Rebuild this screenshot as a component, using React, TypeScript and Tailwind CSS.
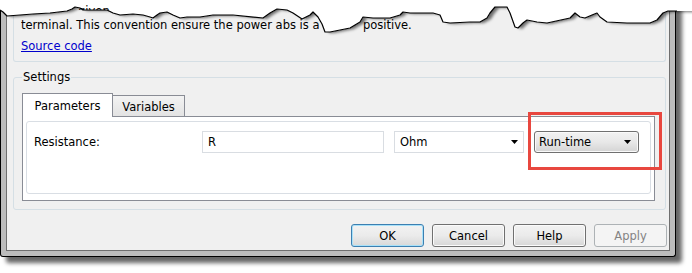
import React from "react";

const tearPts: [number, number][] = [
  [0, 10], [3, 12], [7, 16], [20, 15], [33, 14], [50, 13], [67, 11], [72, 9], [75, 7], [80, 8], [83, 10], [107, 10],
  [113, 13], [120, 15], [133, 14], [143, 15], [150, 17], [153, 18], [157, 15], [160, 13], [167, 12], [173, 15],
  [180, 18], [187, 17], [200, 17], [213, 15], [233, 15], [263, 18], [270, 13], [277, 9], [287, 10], [293, 13],
  [302, 19], [310, 15], [313, 12], [318, 17], [322, 24], [325, 32], [330, 32], [340, 30], [350, 28], [355, 25],
  [360, 22], [363, 17], [373, 18], [390, 18], [400, 15], [403, 12], [410, 13], [417, 13], [433, 13], [440, 15],
  [443, 22], [450, 23], [470, 22], [480, 22], [487, 18], [490, 13], [495, 7], [507, 7], [510, 13], [515, 27],
  [518, 28], [523, 23], [527, 20], [537, 22], [547, 23], [570, 18], [575, 13], [580, 17], [585, 18], [592, 15],
  [597, 13], [600, 17], [607, 22], [627, 23], [640, 23], [650, 23], [657, 20], [663, 13], [668, 11], [677, 11],
];

function Arrow() {
  return (
    <svg width="7" height="4" viewBox="0 0 7 4" className="block">
      <polygon points="0,0 7,0 3.5,4" fill="#000" />
    </svg>
  );
}

function Btn({ label, variant }: { label: string; variant?: "default" | "disabled" }) {
  if (variant === "default") {
    return (
      <div className="w-[73px] h-[23px] rounded-[3px] border border-[#3c7fb1] shadow-[inset_0_0_0_1px_#a8e1f9] bg-gradient-to-b from-[#f2f2f2] via-[#ebebeb] to-[#d8d8d8] flex items-center justify-center">
        {label}
      </div>
    );
  }
  if (variant === "disabled") {
    return (
      <div className="w-[73px] h-[23px] rounded-[3px] border border-[#adb2b5] bg-[#f4f4f4] text-[#838383] flex items-center justify-center">
        {label}
      </div>
    );
  }
  return (
    <div className="w-[73px] h-[23px] rounded-[3px] border border-[#707070] shadow-[inset_0_0_0_1px_#fbfbfb] bg-gradient-to-b from-[#f2f2f2] via-[#ebebeb] to-[#d6d6d6] flex items-center justify-center">
      {label}
    </div>
  );
}

export default function App() {
  const line = tearPts.map((p) => p.join(",")).join(" ");
  const poly = `0,0 ${line} 692,11 692,0`;
  return (
    <div className="relative w-[692px] h-[273px] bg-white overflow-hidden font-['DejaVu_Sans',sans-serif] text-[11.5px] leading-[14px] text-black">
      {/* window */}
      <div className="w-[676px] h-[257px] border border-t-0 border-black bg-[#bcbcbc] px-[5px] pb-[5px] rounded-b-[3px] shadow-[6px_6px_4px_rgba(0,0,0,0.6)]">
        <div className="h-full border border-t-0 border-[#6f6f6f] bg-[#f0f0f0] flex flex-col">
          {/* description box */}
          <div className="ml-[6px] mr-[3px] h-[62px] shrink-0 border border-t-0 border-[#d5dfe5] rounded-b-[3px] pl-[7px] pt-[18px]">
            <div className="flex whitespace-nowrap">
              <span className="w-[342px] overflow-hidden">terminal. This convention ensure the power abs is a</span>
              <span>positive.</span>
            </div>
            <div className="mt-[7px]">
              <span className="text-[#0000cc] underline">Source code</span>
            </div>
          </div>

          {/* settings group */}
          <div className="relative mt-[15px] ml-[6px] mr-[3px] h-[133px] shrink-0 border border-[#d5dfe5] rounded-[3px] pt-[15px] pl-[8px] pr-[10px]">
            <span className="absolute left-[8px] top-[-8px] bg-[#f0f0f0] px-[1px]">Settings</span>
            <div className="relative z-10 flex items-end h-[24px]">
              <div className="w-[91px] h-[24px] border border-b-0 border-[#898c95] bg-white flex items-center justify-center pt-[1px]">
                Parameters
              </div>
              <div className="w-[72px] h-[22px] border border-l-0 border-[#898c95] bg-gradient-to-b from-[#f3f3f3] to-[#e3e3e3] flex items-center justify-center pt-[1px]">
                Variables
              </div>
            </div>
            <div className="-mt-[1px] h-[85px] border border-[#898c95] bg-white pt-[4px] px-[3px] pb-[6px]">
              <div className="h-full border border-[#d9dee4] rounded-[3px] pt-[9px] pl-[7px]">
                <div className="flex items-center h-[22px]">
                  <div className="w-[168px]">Resistance:</div>
                  <div className="w-[182px] h-[22px] border border-[#d9dde2] bg-white flex items-center pl-[5px]">R</div>
                  <div className="ml-[10px] w-[130px] h-[22px] border border-[#d9dde2] bg-white flex items-center justify-between pl-[5px] pr-[5px]">
                    <span>Ohm</span>
                    <Arrow />
                  </div>
                  <div className="ml-[10px] w-[105px] h-[22px] rounded-[3px] border border-[#707070] shadow-[inset_0_0_0_1px_#fafafa] bg-gradient-to-b from-[#f2f2f2] via-[#e8e8e8] to-[#d4d4d4] flex items-center justify-between pl-[4px] pr-[7px]">
                    <span>Run-time</span>
                    <Arrow />
                  </div>
                </div>
              </div>
            </div>
          </div>

          {/* buttons */}
          <div className="mt-[14px] mr-[2px] flex justify-end gap-[8px]">
            <Btn label="OK" variant="default" />
            <Btn label="Cancel" />
            <Btn label="Help" />
            <Btn label="Apply" variant="disabled" />
          </div>
        </div>
      </div>

      {/* torn top edge */}
      <svg className="absolute left-0 top-0 pointer-events-none" width="692" height="60" viewBox="0 0 692 60">
        <defs>
          <filter id="tearShadow" x="-5%" y="-20%" width="110%" height="160%">
            <feDropShadow dx="4" dy="1" stdDeviation="1.5" floodColor="#000" floodOpacity="0.55" />
          </filter>
          <clipPath id="givenClip">
            <rect x="0" y="5" width="692" height="5" />
          </clipPath>
        </defs>
        <polygon points={poly} fill="#fff" filter="url(#tearShadow)" />
        <g clipPath="url(#givenClip)">
          <text x="78" y="15" fontFamily="DejaVu Sans, sans-serif" fontSize="11.5" fill="#000">given</text>
        </g>
        <polyline points={line} fill="none" stroke="#000" strokeWidth="1.2" strokeLinejoin="round" />
      </svg>

      {/* red annotation */}
      <div className="absolute left-[528px] top-[112px] w-[134px] h-[58px] border-[3px] border-[#e8473f]" />
    </div>
  );
}
